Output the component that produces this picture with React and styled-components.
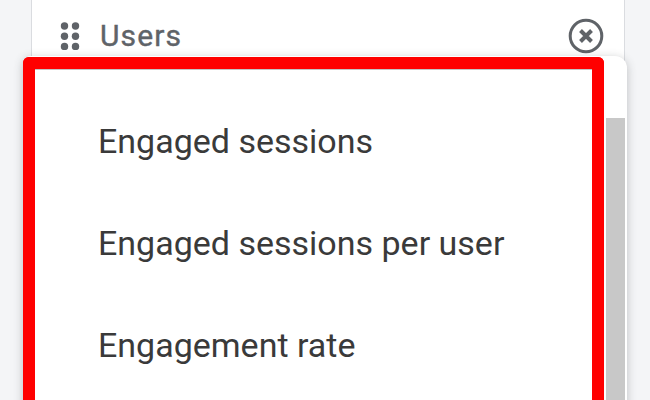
import React from "react";
import styled, { createGlobalStyle } from "styled-components";

const items = ["Engaged sessions", "Engaged sessions per user", "Engagement rate"];

const App = () => {
  return (
    <>
      <GlobalStyle />
      <Page>
        <Card>
          <MetricRow>
            <DragHandle viewBox="0 0 20 28">
              <circle cx="4.5" cy="4" r="3.7" />
              <circle cx="15.5" cy="4" r="3.7" />
              <circle cx="4.5" cy="14.2" r="3.7" />
              <circle cx="15.5" cy="14.2" r="3.7" />
              <circle cx="4.5" cy="24.4" r="3.7" />
              <circle cx="15.5" cy="24.4" r="3.7" />
            </DragHandle>
            <MetricName>Users</MetricName>
            <RemoveIcon viewBox="0 0 36 36">
              <circle cx="18" cy="18" r="15.8" />
              <path d="M12.5 12.5l11 11M23.5 12.5l-11 11" />
            </RemoveIcon>
          </MetricRow>
        </Card>
        <Dropdown>
          <Highlight>
            {items.map((item) => (
              <MenuItem key={item}>{item}</MenuItem>
            ))}
          </Highlight>
          <ScrollTrack>
            <ScrollThumb />
          </ScrollTrack>
        </Dropdown>
      </Page>
    </>
  );
};

const GlobalStyle = createGlobalStyle`
  html, body {
    margin: 0;
    height: 100%;
    overflow: hidden;
  }
`;

const Page = styled.div`
  position: relative;
  width: 650px;
  height: 400px;
  overflow: hidden;
  background: #f4f5f7;
  font-family: Roboto, "Liberation Sans", sans-serif;
`;

const Card = styled.div`
  width: 594px;
  height: 400px;
  margin-left: 31px;
  box-sizing: border-box;
  background: #fff;
  border-left: 1px solid #dadce0;
  border-right: 1px solid #dadce0;
`;

const MetricRow = styled.div`
  display: flex;
  align-items: center;
  height: 71px;
  padding: 0 20px 0 28px;
`;

const DragHandle = styled.svg`
  width: 20px;
  height: 28px;
  fill: #5f6368;
`;

const MetricName = styled.span`
  flex: 1;
  margin-left: 20px;
  font-size: 30px;
  font-weight: 400;
  letter-spacing: 1.1px;
  color: #5f6368;
  -webkit-text-stroke: 0.4px #5f6368;
`;

const RemoveIcon = styled.svg`
  width: 36px;
  height: 36px;
  fill: none;
  stroke: #5f6368;
  stroke-width: 3;

  path {
    stroke-width: 4;
  }
`;

const Dropdown = styled.div`
  position: absolute;
  top: 56px;
  left: 23px;
  display: flex;
  width: 604px;
  height: 400px;
  background: #fff;
  border-radius: 8px 12px 0 0;
  box-shadow: 0 2px 10px rgba(60, 64, 67, 0.3);
`;

const Highlight = styled.div`
  box-sizing: border-box;
  width: 581px;
  height: 400px;
  margin-top: 1px;
  padding-top: 21px;
  border: 12.5px solid #f00;
  border-bottom: 0;
  border-radius: 6px 6px 0 0;
  background: #fff;
  box-shadow: inset 0 1px 0 #c4c4c4;
`;

const MenuItem = styled.div`
  height: 102px;
  padding-left: 63px;
  font-size: 34px;
  line-height: 102px;
  color: #3a3a3a;
`;

const ScrollTrack = styled.div`
  flex: 1;
  padding: 62px 2px 0 2px;
`;

const ScrollThumb = styled.div`
  height: 100%;
  background: #c8c8c8;
`;

export default App;
